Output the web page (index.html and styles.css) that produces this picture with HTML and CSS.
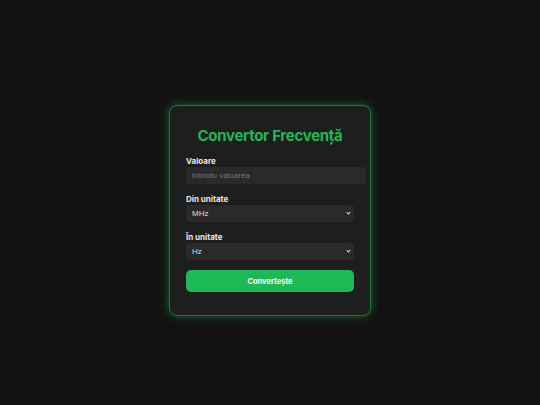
FILE: index.html
```html
<!DOCTYPE html>
<html lang="ro">
<head>
<meta charset="utf-8">
<title>Convertor Frecvență</title>
<link rel="stylesheet" href="styles.css">
</head>
<body>
<div class="card">
  <h2 class="title">Convertor Frecvență</h2>
  <div class="group">
    <label class="label" for="val">Valoare</label>
    <input class="input" id="val" type="number" placeholder="Introdu valoarea">
  </div>
  <div class="group">
    <label class="label" for="from">Din unitate</label>
    <div class="select-wrap">
      <select class="select" id="from">
        <option>MHz</option>
        <option>Hz</option>
        <option>kHz</option>
        <option>GHz</option>
      </select>
    </div>
  </div>
  <div class="group">
    <label class="label" for="to">În unitate</label>
    <div class="select-wrap">
      <select class="select" id="to">
        <option>Hz</option>
        <option>kHz</option>
        <option>MHz</option>
        <option>GHz</option>
      </select>
    </div>
  </div>
  <button class="button" type="button">Convertește</button>
</div>
</body>
</html>
```
FILE: styles.css
```css
html { background: #121212; }
body {
  margin: 8px;
  min-height: 100vh;
  display: flex;
  align-items: center;
  justify-content: center;
  background: #121212;
  font-family: "Inter", "DejaVu Sans", sans-serif;
  color: #e6e6e6;
}
.card {
  width: 168px;
  padding: 21px 16px 23px;
  background: #1e1e1e;
  border: 1px solid #1f7a3e;
  border-radius: 8px;
  box-shadow: 0 0 10px rgba(29, 185, 84, 0.5);
}
.title {
  margin: 0 0 11px;
  text-align: center;
  color: #1db954;
  font-size: 15px;
  line-height: 18px;
  font-weight: 700;
  letter-spacing: -0.3px;
}
.group { margin-bottom: 10px; }
.label {
  display: block;
  margin-bottom: 1px;
  font-size: 8px;
  line-height: 10px;
  font-weight: 700;
  color: #e6e6e6;
}
.input {
  display: block;
  width: 100%;
  box-sizing: content-box;
  padding: 4px 6px;
  height: 9px;
  border: none;
  border-radius: 4px;
  background: #2a2a2a;
  color: #ddd;
  font-family: "Liberation Sans", Arial, sans-serif;
  font-size: 8px;
  outline: none;
}
.input::placeholder { color: #777; }
.select-wrap { position: relative; }
.select-wrap::after {
  content: "";
  position: absolute;
  right: 4px;
  top: 6px;
  width: 2px;
  height: 2px;
  border-right: 1px solid #ddd;
  border-bottom: 1px solid #ddd;
  transform: rotate(45deg);
  pointer-events: none;
}
.select {
  display: block;
  width: 100%;
  height: 17px;
  padding: 0 6px;
  border: none;
  border-radius: 4px;
  background: #2a2a2a;
  color: #ddd;
  -webkit-appearance: none;
  appearance: none;
  font-family: "Liberation Sans", Arial, sans-serif;
  font-size: 8px;
  outline: none;
}
.button {
  display: block;
  width: 100%;
  height: 22px;
  margin: 0;
  border: none;
  border-radius: 5px;
  background: #1db954;
  color: #fff;
  font-family: "Inter", "DejaVu Sans", sans-serif;
  font-size: 7.5px;
  font-weight: 700;
}
```
